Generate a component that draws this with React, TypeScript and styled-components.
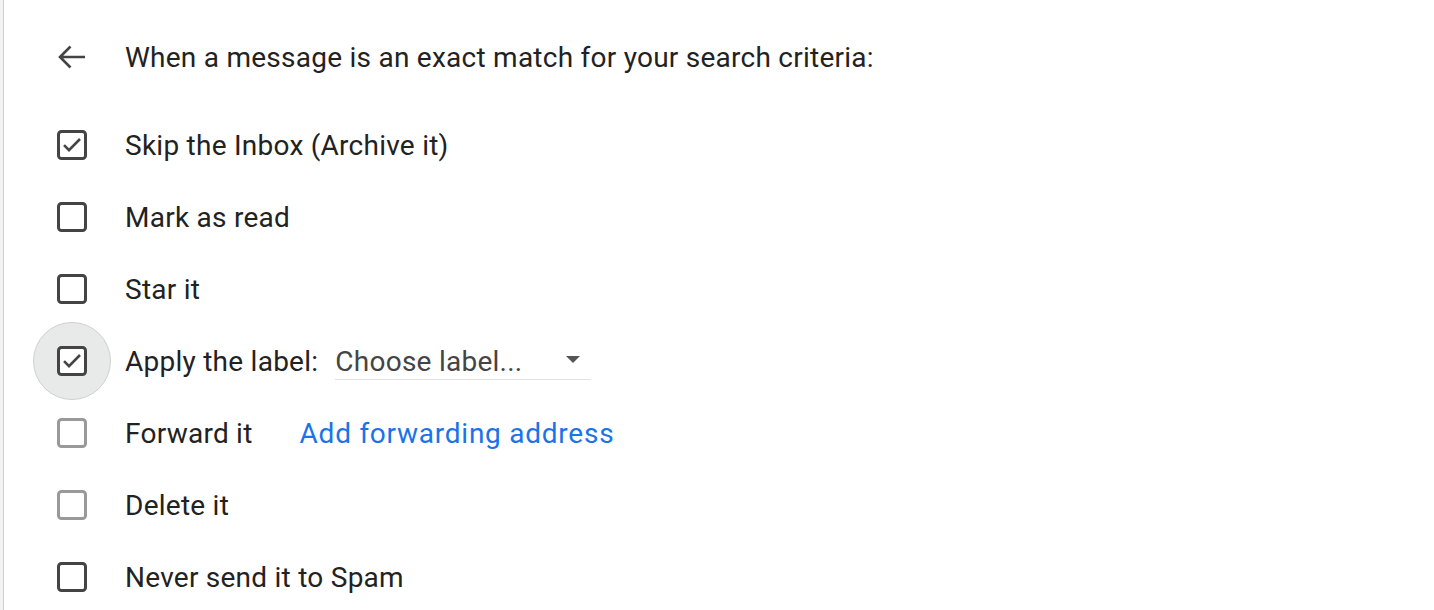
import React from "react";
import styled, { createGlobalStyle } from "styled-components";

const Global = createGlobalStyle`
  html, body { margin: 0; padding: 0; background: #fff; }
  body { font-family: Roboto, "Noto Sans", "Liberation Sans", Arial, sans-serif; }
`;

const Page = styled.div`
  display: flex;
  min-height: 610px;
`;

const Gutter = styled.div`
  width: 3px;
  background: #f3f3f3;
  border-right: 1px solid #cfcfcf;
  flex: none;
`;

const Panel = styled.div`
  flex: 1;
  padding: 21px 0 0 29px;
  display: flex;
  flex-direction: column;
`;

const Header = styled.div`
  height: 72px;
  display: flex;
  align-items: center;
  margin-bottom: 16px;
`;

const Row = styled.div`
  height: 72px;
  display: flex;
  align-items: center;
`;

const IconCell = styled.div<{ $halo?: boolean }>`
  width: 78px;
  height: 78px;
  flex: none;
  display: flex;
  align-items: center;
  justify-content: center;
  border-radius: 50%;
  box-sizing: border-box;
  background: ${(p) => (p.$halo ? "#e8e9e9" : "transparent")};
  border: 1px solid ${(p) => (p.$halo ? "#cfd0d0" : "transparent")};
  margin-right: 14px;
`;

const Label = styled.span`
  font-size: 28px;
  color: #222;
  letter-spacing: 0.25px;
  white-space: nowrap;
`;

const Select = styled.div`
  margin-left: 17px;
  width: 256px;
  height: 36px;
  box-sizing: border-box;
  border-bottom: 1px solid #e3e3e3;
  display: flex;
  align-items: center;
  justify-content: space-between;
  padding-right: 11px;
  margin-top: 2px;
`;

const SelectText = styled.span`
  font-size: 28px;
  letter-spacing: 0.25px;
  color: #444;
  white-space: nowrap;
  margin-top: -1px;
`;

const Caret = styled.span`
  width: 0;
  height: 0;
  border-left: 7px solid transparent;
  border-right: 7px solid transparent;
  border-top: 7px solid #555;
  margin-top: -4px;
`;

const Link = styled.a`
  margin-left: 47px;
  font-size: 28px;
  letter-spacing: 0.75px;
  color: #1a73e8;
  text-decoration: none;
  white-space: nowrap;
  cursor: pointer;
`;

const BackArrow = () => (
  <svg width="30" height="26" viewBox="0 0 30 26">
    <path
      d="M28 13H3M13.5 2.5L3 13l10.5 10.5"
      fill="none"
      stroke="#444"
      strokeWidth="2.6"
      strokeLinecap="butt"
      strokeLinejoin="miter"
    />
  </svg>
);

const Checkbox = ({ checked, muted }: { checked?: boolean; muted?: boolean }) => {
  const c = muted ? "#999" : "#444";
  return (
    <svg width="30" height="30" viewBox="0 0 30 30">
      <rect x="1.5" y="1.5" width="27" height="27" rx="3" fill="#fff" stroke={c} strokeWidth="3" />
      {checked && (
        <path d="M7 15.2l5 5L23 9" fill="none" stroke={c} strokeWidth="2.6" strokeLinecap="butt" />
      )}
    </svg>
  );
};

export default function App() {
  return (
    <>
      <Global />
      <Page>
        <Gutter />
        <Panel>
          <Header>
            <IconCell>
              <BackArrow />
            </IconCell>
            <Label>When a message is an exact match for your search criteria:</Label>
          </Header>
          <Row>
            <IconCell>
              <Checkbox checked />
            </IconCell>
            <Label>Skip the Inbox (Archive it)</Label>
          </Row>
          <Row>
            <IconCell>
              <Checkbox />
            </IconCell>
            <Label>Mark as read</Label>
          </Row>
          <Row>
            <IconCell>
              <Checkbox />
            </IconCell>
            <Label>Star it</Label>
          </Row>
          <Row>
            <IconCell $halo>
              <Checkbox checked />
            </IconCell>
            <Label>Apply the label:</Label>
            <Select>
              <SelectText>Choose label...</SelectText>
              <Caret />
            </Select>
          </Row>
          <Row>
            <IconCell>
              <Checkbox muted />
            </IconCell>
            <Label>Forward it</Label>
            <Link>Add forwarding address</Link>
          </Row>
          <Row>
            <IconCell>
              <Checkbox muted />
            </IconCell>
            <Label>Delete it</Label>
          </Row>
          <Row>
            <IconCell>
              <Checkbox />
            </IconCell>
            <Label>Never send it to Spam</Label>
          </Row>
        </Panel>
      </Page>
    </>
  );
}
